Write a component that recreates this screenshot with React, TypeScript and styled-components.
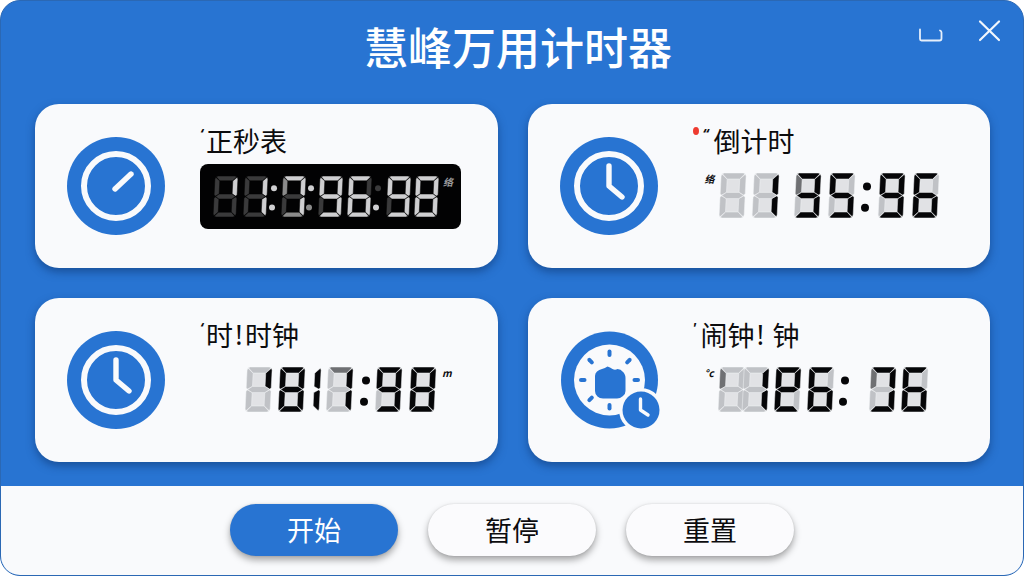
import React, { ReactNode } from 'react';
import styled, { createGlobalStyle } from 'styled-components';

const blue = '#2874d2';
const ink = '#0c0c0e';
const paper = '#f9fafc';

const GlobalStyle = createGlobalStyle`
  * {
    box-sizing: border-box;
  }
  body {
    margin: 0;
    background: #fff;
    font-family: "Noto Sans CJK SC", "Noto Sans", sans-serif;
    color: ${ink};
  }
`;

const Window = styled.main`
  display: flex;
  flex-direction: column;
  min-height: 100vh;
  background: ${blue};
  border: 1px solid #2b68b4;
  border-radius: 20px;
  overflow: hidden;
`;

const Header = styled.header`
  display: grid;
  grid-template-columns: 1fr auto 1fr;
  padding: 0 18px 13px 30px;
`;

const Title = styled.h1`
  grid-column: 2;
  margin: 0;
  font-size: 44px;
  line-height: 90px;
  font-weight: 500;
  color: #fff;
`;

const Controls = styled.div`
  display: flex;
  justify-content: flex-end;
  align-items: flex-start;
  gap: 26px;
  padding-top: 13px;
`;

const ControlButton = styled.button`
  width: 32px;
  height: 32px;
  padding: 0;
  border: 0;
  background: none;
  cursor: pointer;
`;

const Cards = styled.div`
  flex: 1;
  display: grid;
  grid-template-columns: repeat(2, minmax(0, 1fr));
  grid-auto-rows: 164px;
  gap: 30px;
  padding: 0 33px 24px 34px;
`;

const Card = styled.section`
  display: flex;
  gap: 35px;
  padding-left: 32px;
  background: ${paper};
  border-radius: 24px;
  box-shadow: 0 4px 8px rgba(10, 45, 100, 0.5);
`;

const Dial = styled.svg`
  flex: none;
  align-self: center;
  width: 98px;
  height: 98px;
  overflow: visible;
`;

const CardBody = styled.div`
  flex: 1;
  min-width: 0;
  padding-top: 20px;
`;

const CardTitle = styled.h2`
  display: flex;
  align-items: flex-start;
  height: 36px;
  margin: 0;
  font-size: 27px;
  line-height: 34px;
  font-weight: 400;
`;

const Mark = styled.span<{ $width: number }>`
  width: ${(p) => p.$width}px;
  font-family: "Noto Sans", sans-serif;
  font-size: 14px;
  line-height: 20px;
  font-style: italic;
  font-weight: 700;
`;

const Bang = styled.span`
  width: 12px;
  text-align: center;
  font-family: "Noto Sans", sans-serif;
`;

const Space = styled.span`
  width: 6px;
`;

const RedDot = styled.i`
  width: 6px;
  height: 8px;
  margin: 3px 4px 0 0;
  border-radius: 50%;
  background: #ee3b30;
`;

const Panel = styled.div`
  display: flex;
  gap: 2px;
  width: 261px;
  height: 65px;
  margin-top: 4px;
  padding: 12px 0 0 13px;
  border-radius: 8px;
  background: #020203;
  color: #9a9a9c;
`;

const Lcd = styled.div<{ $indent: number }>`
  display: flex;
  gap: 4px;
  padding: 13px 0 0 ${(p) => p.$indent}px;
`;

const Unit = styled.small`
  font-size: 10px;
  line-height: 12px;
  font-weight: 700;
  font-style: italic;
`;

const Footer = styled.footer`
  display: flex;
  justify-content: center;
  gap: 30px;
  padding: 18px 0 19px;
  background: ${paper};
`;

const ActionButton = styled.button<{ $primary?: boolean }>`
  width: 168px;
  height: 52px;
  padding: 0;
  border: 0;
  border-radius: 26px;
  font-family: inherit;
  font-size: 27px;
  line-height: 52px;
  color: ${(p) => (p.$primary ? '#fff' : ink)};
  background: ${(p) => (p.$primary ? blue : '#fbfbfd')};
  box-shadow: 0 4px 7px rgba(0, 0, 0, 0.34), 0 0 2px rgba(0, 0, 0, 0.12);
  cursor: pointer;
`;

type Tone = { off: string; dim: string; on: string; back: string; line: string };

const lcdTone: Tone = { off: '#c0c2c6', dim: '#6f7073', on: '#060608', back: '#e1e2e5', line: '#f3f4f6' };
const ledTone: Tone = { off: '#3a3a3b', dim: '#8a8a8a', on: '#cfcfd1', back: 'none', line: '#020203' };

// segs: one character per segment a-g, 0 = off, 1 = lit, 2 = half lit, - = missing
type Cell = { x: number; segs: string };
type Colon = { x: number; dots?: string };

interface ReadoutProps {
  label: string;
  width: number;
  height: number;
  cellWidth: number;
  cells: Cell[];
  colons: Colon[];
  tone?: Tone;
}

function segmentPoints(w: number, h: number, t: number): number[][][] {
  const m = h / 2;
  const s = t / 2;
  return [
    [[1.2, 0.8], [3, 0], [w - 3, 0], [w - 1.2, 0.8], [w - t, t - 0.2], [t, t - 0.2]],
    [[w, 3], [w - 0.8, 1.2], [w - t, t], [w - t, m - s], [w - 1.5, m - 0.4], [w, m - 1.6]],
    [[w, h - 3], [w - 0.8, h - 1.2], [w - t, h - t], [w - t, m + s], [w - 1.5, m + 0.4], [w, m + 1.6]],
    [[1.2, h - 0.8], [3, h], [w - 3, h], [w - 1.2, h - 0.8], [w - t, h - t + 0.2], [t, h - t + 0.2]],
    [[0, h - 3], [0.8, h - 1.2], [t, h - t], [t, m + s], [1.5, m + 0.4], [0, m + 1.6]],
    [[0, 3], [0.8, 1.2], [t, t], [t, m - s], [1.5, m - 0.4], [0, m - 1.6]],
    [[1.5, m], [t, m - s], [w - t, m - s], [w - 1.5, m], [w - t, m + s], [t, m + s]],
  ];
}

function Readout({ label, width, height, cellWidth, cells, colons, tone = lcdTone }: ReadoutProps) {
  const lean = (x: number, y: number) => x + (height - y) * 0.05;
  const isLed = tone === ledTone;
  const shapes = segmentPoints(cellWidth, height, isLed ? 5 : 6.2);
  const toStr = (pts: number[][], x0: number) => pts.map(([x, y]) => `${lean(x + x0, y).toFixed(2)},${y}`).join(' ');
  const colorOf = (c: string) => (c === '1' ? tone.on : c === '2' ? tone.dim : tone.off);
  return (
    <svg role="img" aria-label={label} width={width} height={height} viewBox={`0 0 ${width} ${height}`}>
      {cells.map((cell) => (
        <g key={cell.x}>
          {!cell.segs.includes('-') && (
            <polygon
              points={toStr([[2, 2], [cellWidth - 2, 2], [cellWidth - 2, height - 2], [2, height - 2]], cell.x)}
              fill={tone.back}
            />
          )}
          {shapes.map((pts, i) =>
            cell.segs[i] === '-' ? null : (
              <polygon
                key={i}
                points={toStr(pts, cell.x)}
                fill={colorOf(cell.segs[i])}
                stroke={tone.line}
                strokeWidth={0.5}
              />
            ),
          )}
        </g>
      ))}
      {colons.map(({ x, dots = '11' }) => (
        <g key={x}>
          <circle cx={x + 1} cy={height * 0.3} r={isLed ? 3 : 4} fill={colorOf(dots[0])} />
          <circle cx={x - 1} cy={height * 0.77} r={isLed ? 3 : 4} fill={colorOf(dots[1])} />
        </g>
      ))}
    </svg>
  );
}

function ClockDial({ children }: { children: ReactNode }) {
  return (
    <Dial viewBox="0 0 98 98" aria-hidden="true">
      <circle cx="49" cy="49" r="49" fill={blue} />
      <circle cx="49" cy="49" r="32" fill="none" stroke={paper} strokeWidth="6" />
      <g fill="none" stroke={paper} strokeWidth="5.4" strokeLinecap="round" strokeLinejoin="round">
        {children}
      </g>
    </Dial>
  );
}

function AlarmDial() {
  const ticks = [0, 45, 90, 180, 225, 270, 315];
  return (
    <Dial viewBox="0 0 98 98" aria-hidden="true">
      <circle cx="49.500" cy="49" r="48.5" fill={blue} />
      <circle cx="49.500" cy="49" r="35.5" fill={paper} />
      {ticks.map((deg) => (
        <line
          key={deg}
          x1="49.500"
          y1="20.500"
          x2="49.500"
          y2="24"
          stroke={blue}
          strokeWidth="4"
          strokeLinecap="round"
          transform={`rotate(${deg} 49.5 49)`}
        />
      ))}
      <path
        d="M37 40.500 Q39 38.500 42 38 Q45 37 47.500 35.500 Q50 36 52.500 38 Q55 39.500 57.500 38 Q61 38 62.500 40.500 Q65.500 43 65.500 47 V60 Q65.500 63 63 65 Q60 67.500 57 67.500 H43 Q39.500 67.500 37.500 65.500 Q35 63.500 35 60 V45 Q35 42 37 40.500 Z"
        fill={blue}
      />
      <circle cx="81" cy="79" r="22" fill={paper} />
      <circle cx="81" cy="79" r="18.500" fill={blue} />
      <path d="M80.500 68 V79 L88 84" fill="none" stroke={paper} strokeWidth="3.400" strokeLinecap="round" strokeLinejoin="round" />
    </Dial>
  );
}

export default function App() {
  return (
    <>
      <GlobalStyle />
      <Window>
        <Header>
          <Title>慧峰万用计时器</Title>
          <Controls>
            <ControlButton type="button" aria-label="最小化">
              <svg width="32" height="32" viewBox="0 0 32 32" fill="none" stroke="#e6effb" strokeWidth="1.8" strokeLinecap="round">
                <path d="M5 15.500 V25 Q5 26.500 6.500 26.500 H24.500 Q26.500 26.500 26.500 24.500 V18.500 Q26.500 17 25 16.500" />
              </svg>
            </ControlButton>
            <ControlButton type="button" aria-label="关闭">
              <svg width="32" height="32" viewBox="0 0 32 32" fill="none" stroke="#f2f7fd" strokeWidth="2.2" strokeLinecap="round">
                <path d="M7 7.500 L26 26 M26 7.500 L7 26" />
              </svg>
            </ControlButton>
          </Controls>
        </Header>

        <Cards>
          <Card>
            <ClockDial>
              <path d="M48 52 L64 37" />
            </ClockDial>
            <CardBody>
              <CardTitle>
                <Mark $width={6}>‘</Mark>正秒表
              </CardTitle>
              <Panel>
                <Readout
                  label="11:7:36:98"
                  width={228}
                  height={41}
                  cellWidth={23}
                  tone={ledTone}
                  cells={[
                    { x: 0, segs: '0100000' },
                    { x: 30, segs: '0110000' },
                    { x: 68, segs: '1112020' },
                    { x: 105, segs: '1111011' },
                    { x: 134, segs: '1011111' },
                    { x: 173, segs: '1111011' },
                    { x: 201, segs: '1111111' },
                  ]}
                  colons={[{ x: 60 }, { x: 97, dots: '12' }, { x: 164, dots: '01' }]}
                />
                <Unit>络</Unit>
              </Panel>
            </CardBody>
          </Card>

          <Card>
            <ClockDial>
              <path d="M49 29 V49 L62 60" />
            </ClockDial>
            <CardBody>
              <CardTitle>
                <RedDot />
                <Mark $width={11}>“</Mark>倒计时
              </CardTitle>
              <Lcd $indent={12}>
                <Unit>络</Unit>
                <Readout
                  label="1 35:96"
                  width={221}
                  height={45}
                  cellWidth={25}
                  cells={[
                    { x: 0, segs: '0000000' },
                    { x: 33, segs: '0110000' },
                    { x: 75, segs: '1111021' },
                    { x: 109, segs: '1011011' },
                    { x: 159, segs: '1111011' },
                    { x: 193, segs: '1011111' },
                  ]}
                  colons={[{ x: 147 }]}
                />
              </Lcd>
            </CardBody>
          </Card>

          <Card>
            <ClockDial>
              <path d="M49 29 V49 L62 60" />
            </ClockDial>
            <CardBody>
              <CardTitle>
                <Mark $width={6}>‘</Mark>时<Bang>!</Bang>时钟
              </CardTitle>
              <Lcd $indent={45}>
                <Readout
                  label="1817:98"
                  width={193}
                  height={45}
                  cellWidth={25}
                  cells={[
                    { x: 0, segs: '0100000' },
                    { x: 33, segs: '1111111' },
                    { x: 49, segs: '-11----' },
                    { x: 81, segs: '2110000' },
                    { x: 130, segs: '1111011' },
                    { x: 164, segs: '1111111' },
                  ]}
                  colons={[{ x: 120 }]}
                />
                <Unit>m</Unit>
              </Lcd>
            </CardBody>
          </Card>

          <Card>
            <AlarmDial />
            <CardBody>
              <CardTitle>
                <Mark $width={8}>'</Mark>闹钟<Bang>!</Bang><Space />钟
              </CardTitle>
              <Lcd $indent={12}>
                <Unit>°c</Unit>
                <Readout
                  label="126: 36"
                  width={212}
                  height={45}
                  cellWidth={25}
                  cells={[
                    { x: 0, segs: '0000020' },
                    { x: 24, segs: '0110000' },
                    { x: 56, segs: '1101111' },
                    { x: 89, segs: '1011111' },
                    { x: 151, segs: '1111020' },
                    { x: 183, segs: '1011111' },
                  ]}
                  colons={[{ x: 126 }]}
                />
              </Lcd>
            </CardBody>
          </Card>
        </Cards>

        <Footer>
          <ActionButton type="button" $primary>开始</ActionButton>
          <ActionButton type="button">暂停</ActionButton>
          <ActionButton type="button">重置</ActionButton>
        </Footer>
      </Window>
    </>
  );
}
